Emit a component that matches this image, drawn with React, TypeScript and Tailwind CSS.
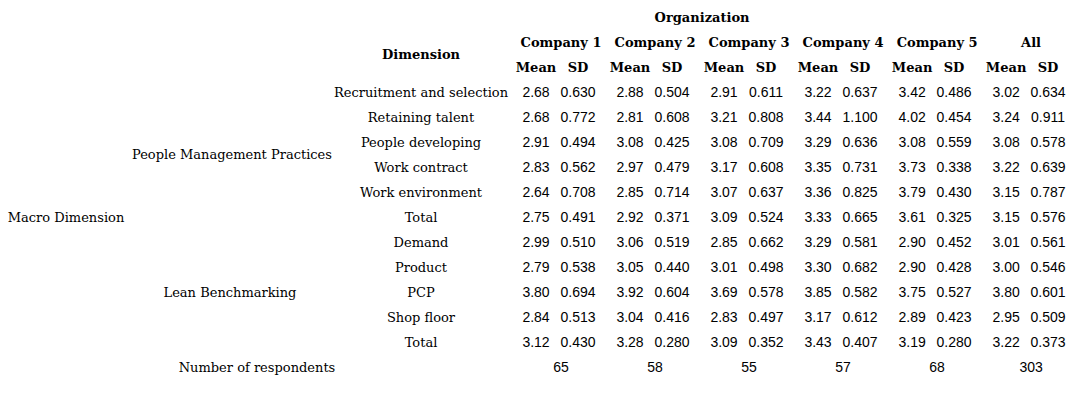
import React from "react";

const serif = "font-['DejaVu_Serif',serif]";
const num = "font-['Liberation_Sans',Arial,sans-serif] text-[14px]";

type Row = { label: string; vals: string[] };

const pmp: Row[] = [
  { label: "Recruitment and selection", vals: ["2.68", "0.630", "2.88", "0.504", "2.91", "0.611", "3.22", "0.637", "3.42", "0.486", "3.02", "0.634"] },
  { label: "Retaining talent", vals: ["2.68", "0.772", "2.81", "0.608", "3.21", "0.808", "3.44", "1.100", "4.02", "0.454", "3.24", "0.911"] },
  { label: "People developing", vals: ["2.91", "0.494", "3.08", "0.425", "3.08", "0.709", "3.29", "0.636", "3.08", "0.559", "3.08", "0.578"] },
  { label: "Work contract", vals: ["2.83", "0.562", "2.97", "0.479", "3.17", "0.608", "3.35", "0.731", "3.73", "0.338", "3.22", "0.639"] },
  { label: "Work environment", vals: ["2.64", "0.708", "2.85", "0.714", "3.07", "0.637", "3.36", "0.825", "3.79", "0.430", "3.15", "0.787"] },
  { label: "Total", vals: ["2.75", "0.491", "2.92", "0.371", "3.09", "0.524", "3.33", "0.665", "3.61", "0.325", "3.15", "0.576"] },
];

const lean: Row[] = [
  { label: "Demand", vals: ["2.99", "0.510", "3.06", "0.519", "2.85", "0.662", "3.29", "0.581", "2.90", "0.452", "3.01", "0.561"] },
  { label: "Product", vals: ["2.79", "0.538", "3.05", "0.440", "3.01", "0.498", "3.30", "0.682", "2.90", "0.428", "3.00", "0.546"] },
  { label: "PCP", vals: ["3.80", "0.694", "3.92", "0.604", "3.69", "0.578", "3.85", "0.582", "3.75", "0.527", "3.80", "0.601"] },
  { label: "Shop floor", vals: ["2.84", "0.513", "3.04", "0.416", "2.83", "0.497", "3.17", "0.612", "2.89", "0.423", "2.95", "0.509"] },
  { label: "Total", vals: ["3.12", "0.430", "3.28", "0.280", "3.09", "0.352", "3.43", "0.407", "3.19", "0.280", "3.22", "0.373"] },
];

const companies = ["Company 1", "Company 2", "Company 3", "Company 4", "Company 5", "All"];
const respondents = ["65", "58", "55", "57", "68", "303"];

function Values({ vals }: { vals: string[] }) {
  return (
    <>
      {vals.map((v, i) => (
        <td key={i} className={`${num} text-center p-0 ${i % 2 === 1 ? "pr-[10px]" : ""}`}>
          {v}
        </td>
      ))}
    </>
  );
}

export default function App() {
  return (
    <div className="bg-white w-[1083px] h-[400px] text-black pt-[5px]">
      <table className={`table-fixed border-collapse w-[1078px] ${serif} text-[13px]`}>
        <colgroup>
          <col className="w-[132px]" />
          <col className="w-[196px]" />
          <col className="w-[186px]" />
          {companies.map((c) => (
            <React.Fragment key={c}>
              <col className="w-[44px]" />
              <col className="w-[50px]" />
            </React.Fragment>
          ))}
        </colgroup>
        <thead>
          <tr className="h-[25px]">
            <td colSpan={3} className="p-0" />
            <th colSpan={8} className="p-0 font-bold text-center">Organization</th>
            <td colSpan={4} className="p-0" />
          </tr>
          <tr className="h-[25px]">
            <td colSpan={2} rowSpan={2} className="p-0" />
            <th rowSpan={2} className="p-0 font-bold text-center align-middle">Dimension</th>
            {companies.map((c) => (
              <th key={c} colSpan={2} className="p-0 font-bold text-center whitespace-nowrap">{c}</th>
            ))}
          </tr>
          <tr className="h-[25px]">
            {companies.map((c) => (
              <React.Fragment key={c}>
                <th className="p-0 font-bold text-center">Mean</th>
                <th className="p-0 pr-[10px] font-bold text-center">SD</th>
              </React.Fragment>
            ))}
          </tr>
        </thead>
        <tbody>
          {pmp.map((r, i) => (
            <tr key={"p" + i} className="h-[25px]">
              {i === 0 && (
                <td rowSpan={11} className="p-0 text-center align-middle whitespace-nowrap">Macro Dimension</td>
              )}
              {i === 0 && (
                <td rowSpan={6} className="p-0 text-center align-middle whitespace-nowrap">People Management Practices</td>
              )}
              <td className="p-0 text-center whitespace-nowrap">{r.label}</td>
              <Values vals={r.vals} />
            </tr>
          ))}
          {lean.map((r, i) => (
            <tr key={"l" + i} className="h-[25px]">
              {i === 0 && (
                <td rowSpan={5} className="p-0 text-center align-middle whitespace-nowrap">Lean Benchmarking</td>
              )}
              <td className="p-0 text-center whitespace-nowrap">{r.label}</td>
              <Values vals={r.vals} />
            </tr>
          ))}
          <tr className="h-[25px]">
            <td colSpan={3} className="p-0 text-center whitespace-nowrap">Number of respondents</td>
            {respondents.map((n) => (
              <td key={n} colSpan={2} className={`${num} p-0 text-center`}>{n}</td>
            ))}
          </tr>
        </tbody>
      </table>
    </div>
  );
}
